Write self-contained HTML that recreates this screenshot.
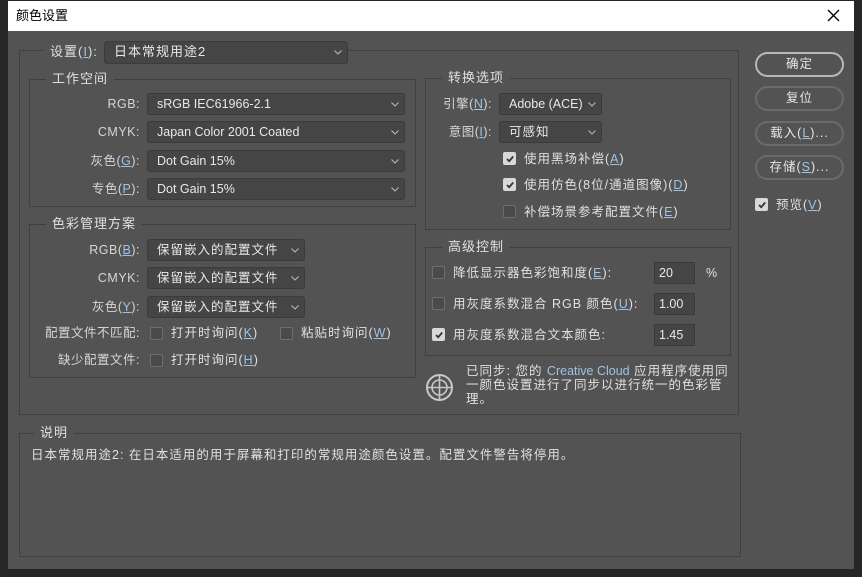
<!DOCTYPE html>
<html><head><meta charset="utf-8">
<style>
*{margin:0;padding:0;box-sizing:border-box}
body{width:862px;height:577px;background:#262626;font-family:"Liberation Sans","Noto Sans CJK SC",sans-serif;font-size:12px;color:#dcdcdc;position:relative;overflow:hidden}
#dlg{position:absolute;left:8px;top:1px;width:846px;height:568px;background:#535353}
#title{position:absolute;left:8px;top:1px;width:846px;height:30px;background:#fff;color:#000;font-size:13px;line-height:30px;padding-left:8px}
#close{position:absolute;right:14px;top:8px}
.a{position:absolute}
.grp{position:absolute;border:1px solid #404040}
.lg{position:absolute;background:#535353;padding:0 6px;font-size:13px;color:#e0e0e0;line-height:16px;letter-spacing:1px}
.dd{position:absolute;height:22px;background:#454545;border:1px solid #3b3b3b;border-radius:3px;color:#e8e8e8;font-size:12.5px;line-height:20px;padding-left:9px}
.dd svg{position:absolute;right:5px;top:8px}
.lbl{position:absolute;text-align:right;line-height:16px;font-size:12.5px;color:#d6d6d6;letter-spacing:0.5px}
.cb{position:absolute;width:13px;height:13px;border:1px solid #6e6e6e;border-radius:2px;background:#4a4a4a}
.cb.on{background:#d8d8d8;border-color:#d8d8d8}
.cb.on svg{position:absolute;left:1px;top:1px}
.t{position:absolute;line-height:16px;font-size:12.5px;color:#e0e0e0;white-space:nowrap;letter-spacing:1px}
.btn{position:absolute;left:755px;width:89px;height:25px;border:2px solid #6a6a6a;border-radius:13px;text-align:center;line-height:21px;font-size:12.5px;color:#e6e6e6;letter-spacing:1px}
.in{position:absolute;width:41px;height:22px;background:#454545;border:1px solid #3a3a3a;color:#e8e8e8;padding-left:4px;line-height:20px;font-size:12.5px}
u{text-decoration:underline;color:#9ec3e6}
</style></head><body>
<div id="dlg"></div>
<div id="title">颜色设置
<svg id="close" width="13" height="13" viewBox="0 0 13 13"><path d="M1 1L12 12M12 1L1 12" stroke="#000" stroke-width="1.3"/></svg></div>

<div class="grp" style="left:19px;top:50px;width:720px;height:365px"></div>
<div class="lg" style="left:44px;top:44px">设置(<u>I</u>):</div>
<div class="dd" style="left:104px;top:41px;width:244px;height:23px;font-size:13px;letter-spacing:1px">日本常规用途2<svg width="8" height="5"><path d="M0.5 0.5L4 4L7.5 0.5" stroke="#bbb" fill="none"/></svg></div>

<div class="grp" style="left:29px;top:79px;width:387px;height:128px"></div>
<div class="lg" style="left:46px;top:71px">工作空间</div>
<div class="lbl" style="left:60px;width:80px;top:96px">RGB:</div>
<div class="dd" style="left:147px;top:93px;width:258px">sRGB IEC61966-2.1<svg width="8" height="5"><path d="M0.5 0.5L4 4L7.5 0.5" stroke="#bbb" fill="none"/></svg></div>
<div class="lbl" style="left:60px;width:80px;top:124px">CMYK:</div>
<div class="dd" style="left:147px;top:121px;width:258px">Japan Color 2001 Coated<svg width="8" height="5"><path d="M0.5 0.5L4 4L7.5 0.5" stroke="#bbb" fill="none"/></svg></div>
<div class="lbl" style="left:60px;width:80px;top:153px">灰色(<u>G</u>):</div>
<div class="dd" style="left:147px;top:150px;width:258px">Dot Gain 15%<svg width="8" height="5"><path d="M0.5 0.5L4 4L7.5 0.5" stroke="#bbb" fill="none"/></svg></div>
<div class="lbl" style="left:60px;width:80px;top:181px">专色(<u>P</u>):</div>
<div class="dd" style="left:147px;top:178px;width:258px">Dot Gain 15%<svg width="8" height="5"><path d="M0.5 0.5L4 4L7.5 0.5" stroke="#bbb" fill="none"/></svg></div>

<div class="grp" style="left:29px;top:224px;width:387px;height:154px"></div>
<div class="lg" style="left:46px;top:216px">色彩管理方案</div>
<div class="lbl" style="left:60px;width:80px;top:242px">RGB(<u>B</u>):</div>
<div class="dd" style="left:147px;top:239px;width:158px;letter-spacing:1px">保留嵌入的配置文件<svg width="8" height="5"><path d="M0.5 0.5L4 4L7.5 0.5" stroke="#bbb" fill="none"/></svg></div>
<div class="lbl" style="left:60px;width:80px;top:270px">CMYK:</div>
<div class="dd" style="left:147px;top:267px;width:158px;letter-spacing:1px">保留嵌入的配置文件<svg width="8" height="5"><path d="M0.5 0.5L4 4L7.5 0.5" stroke="#bbb" fill="none"/></svg></div>
<div class="lbl" style="left:60px;width:80px;top:299px">灰色(<u>Y</u>):</div>
<div class="dd" style="left:147px;top:296px;width:158px;letter-spacing:1px">保留嵌入的配置文件<svg width="8" height="5"><path d="M0.5 0.5L4 4L7.5 0.5" stroke="#bbb" fill="none"/></svg></div>
<div class="lbl" style="left:20px;width:120px;top:325px">配置文件不匹配:</div>
<div class="cb" style="left:150px;top:327px"></div>
<div class="t" style="left:171px;top:325px">打开时询问(<u>K</u>)</div>
<div class="cb" style="left:280px;top:327px"></div>
<div class="t" style="left:301px;top:325px">粘贴时询问(<u>W</u>)</div>
<div class="lbl" style="left:20px;width:120px;top:352px">缺少配置文件:</div>
<div class="cb" style="left:150px;top:354px"></div>
<div class="t" style="left:171px;top:352px">打开时询问(<u>H</u>)</div>

<div class="grp" style="left:425px;top:78px;width:306px;height:152px"></div>
<div class="lg" style="left:442px;top:70px">转换选项</div>
<div class="lbl" style="left:430px;width:62px;top:96px">引擎(<u>N</u>):</div>
<div class="dd" style="left:499px;top:93px;width:103px">Adobe (ACE)<svg width="8" height="5"><path d="M0.5 0.5L4 4L7.5 0.5" stroke="#bbb" fill="none"/></svg></div>
<div class="lbl" style="left:430px;width:62px;top:124px">意图(<u>I</u>):</div>
<div class="dd" style="left:499px;top:121px;width:103px;letter-spacing:1px">可感知<svg width="8" height="5"><path d="M0.5 0.5L4 4L7.5 0.5" stroke="#bbb" fill="none"/></svg></div>
<div class="cb on" style="left:503px;top:152px"><svg width="10" height="10"><path d="M2 5L4.2 7.2L8.2 2.5" stroke="#333" stroke-width="1.8" fill="none"/></svg></div>
<div class="t" style="left:524px;top:151px">使用黑场补偿(<u>A</u>)</div>
<div class="cb on" style="left:503px;top:178px"><svg width="10" height="10"><path d="M2 5L4.2 7.2L8.2 2.5" stroke="#333" stroke-width="1.8" fill="none"/></svg></div>
<div class="t" style="left:524px;top:177px">使用仿色(8位/通道图像)(<u>D</u>)</div>
<div class="cb" style="left:503px;top:205px"></div>
<div class="t" style="left:524px;top:204px">补偿场景参考配置文件(<u>E</u>)</div>

<div class="grp" style="left:425px;top:247px;width:306px;height:109px"></div>
<div class="lg" style="left:442px;top:239px">高级控制</div>
<div class="cb" style="left:432px;top:266px"></div>
<div class="t" style="left:453px;top:265px">降低显示器色彩饱和度(<u>E</u>):</div>
<div class="in" style="left:654px;top:262px">20</div>
<div class="t" style="left:706px;top:265px">%</div>
<div class="cb" style="left:432px;top:297px"></div>
<div class="t" style="left:453px;top:296px">用灰度系数混合 RGB 颜色(<u>U</u>):</div>
<div class="in" style="left:654px;top:293px">1.00</div>
<div class="cb on" style="left:432px;top:328px"><svg width="10" height="10"><path d="M2 5L4.2 7.2L8.2 2.5" stroke="#333" stroke-width="1.8" fill="none"/></svg></div>
<div class="t" style="left:453px;top:327px">用灰度系数混合文本颜色:</div>
<div class="in" style="left:654px;top:324px">1.45</div>

<svg class="a" style="left:425px;top:373px" width="29" height="29" viewBox="0 0 29 29">
<circle cx="14.5" cy="14.5" r="12.5" fill="none" stroke="#c8c8c8" stroke-width="2"/>
<circle cx="14.5" cy="14.5" r="7.5" fill="none" stroke="#c8c8c8" stroke-width="1.6"/>
<path d="M14.5 3V26M3 14.5H26" stroke="#c8c8c8" stroke-width="1.6"/></svg>
<div class="t" style="left:466px;top:364px;line-height:14px;font-size:12.5px">已同步: 您的 <span style="color:#9ec3e6;letter-spacing:0">Creative Cloud</span> 应用程序使用同<br>一颜色设置进行了同步以进行统一的色彩管<br>理。</div>

<div class="grp" style="left:19px;top:433px;width:722px;height:124px"></div>
<div class="lg" style="left:34px;top:425px">说明</div>
<div class="t" style="left:31px;top:447px">日本常规用途2: 在日本适用的用于屏幕和打印的常规用途颜色设置。配置文件警告将停用。</div>

<div class="btn" style="top:52px;border-color:#b8b8b8">确定</div>
<div class="btn" style="top:86px">复位</div>
<div class="btn" style="top:121px">载入(<u>L</u>)...</div>
<div class="btn" style="top:155px">存储(<u>S</u>)...</div>
<div class="cb on" style="left:755px;top:198px"><svg width="10" height="10"><path d="M2 5L4.2 7.2L8.2 2.5" stroke="#333" stroke-width="1.8" fill="none"/></svg></div>
<div class="t" style="left:776px;top:197px">预览(<u>V</u>)</div>
</body></html>
